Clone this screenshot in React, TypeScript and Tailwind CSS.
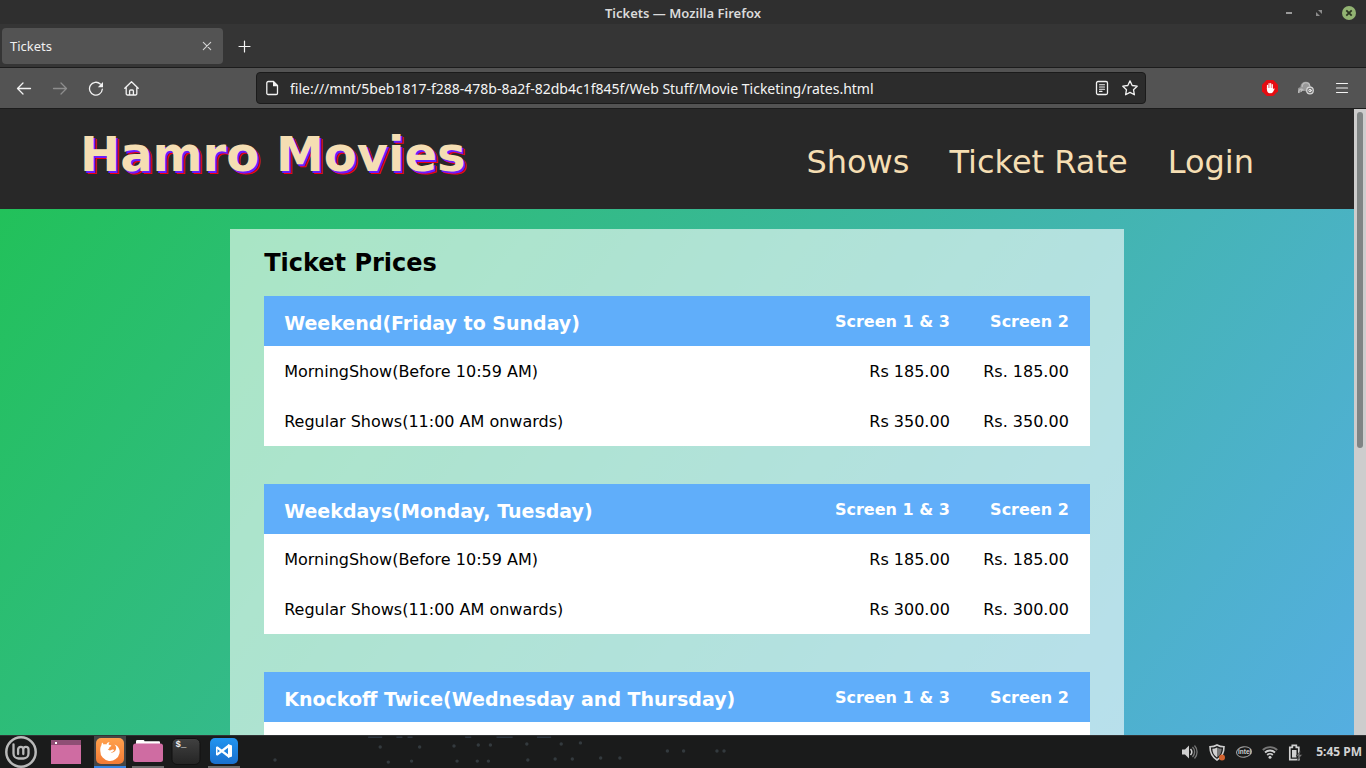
import type { ReactNode } from 'react';

type Rate = { label: string; first: string; second: string };
type RateGroup = { title: string; rates: Rate[] };

const groups: RateGroup[] = [
  {
    title: 'Weekend(Friday to Sunday)',
    rates: [
      { label: 'MorningShow(Before 10:59 AM)', first: 'Rs 185.00', second: 'Rs. 185.00' },
      { label: 'Regular Shows(11:00 AM onwards)', first: 'Rs 350.00', second: 'Rs. 350.00' },
    ],
  },
  {
    title: 'Weekdays(Monday, Tuesday)',
    rates: [
      { label: 'MorningShow(Before 10:59 AM)', first: 'Rs 185.00', second: 'Rs. 185.00' },
      { label: 'Regular Shows(11:00 AM onwards)', first: 'Rs 300.00', second: 'Rs. 300.00' },
    ],
  },
  {
    title: 'Knockoff Twice(Wednesday and Thursday)',
    rates: [],
  },
];

function TitleBar() {
  return (
    <div className="grid h-6 shrink-0 grid-cols-[1fr_auto_1fr] items-center bg-[#2f2f2f] pt-0.5">
      <span />
      <span className="text-[13px] leading-5 font-semibold text-[#dadada]">Tickets — Mozilla Firefox</span>
      <div className="flex items-center justify-end gap-4 pr-2.5">
        <button aria-label="Minimize" className="flex size-3.5 items-center justify-center">
          <svg width="14" height="14" viewBox="0 0 14 14"><path d="M4 6h6v2H4z" fill="#9a9a9a" /></svg>
        </button>
        <button aria-label="Restore" className="flex size-3.5 items-center justify-center">
          <svg width="14" height="14" viewBox="0 0 14 14"><path d="M6 4h4v4zM4 6l4 4H4z" fill="#8c8c8c" /></svg>
        </button>
        <button aria-label="Close window" className="flex size-3.5 items-center justify-center rounded-full bg-[#92b372]">
          <svg width="14" height="14" viewBox="0 0 14 14"><path d="M4.3 4.3l5.4 5.4M9.7 4.3L4.3 9.7" stroke="#2c3522" strokeWidth="1.8" /></svg>
        </button>
      </div>
    </div>
  );
}

function TabStrip() {
  return (
    <div className="flex h-11 shrink-0 items-center border-b border-[#1c1c1c] bg-[#353535] pl-0.5">
      <div className="flex h-9 w-[221px] items-center justify-between rounded bg-[#535353] pr-2 pl-2">
        <span className="pt-0.5 text-[13px] text-[#f0f0f0]">Tickets</span>
        <button aria-label="Close tab" className="size-4">
          <svg width="16" height="16" viewBox="0 0 16 16"><path d="M4.300 4.300l7.400 7.400M11.700 4.300l-7.400 7.400" stroke="#d4d4d4" strokeWidth="1.1" strokeLinecap="round" /></svg>
        </button>
      </div>
      <button aria-label="New tab" className="ml-3.5 size-4">
        <svg width="16" height="16" viewBox="0 0 16 16"><path d="M7.500 3v11M2 8.500h11" stroke="#f4f4f4" strokeWidth="1.2" strokeLinecap="round" /></svg>
      </button>
    </div>
  );
}

function ToolIcon({ label, children }: { label: string; children: ReactNode }) {
  return (
    <button aria-label={label} className="size-4 shrink-0">
      <svg width="16" height="16" viewBox="0 0 16 16" fill="none" stroke="#f2f2f2" strokeWidth="1.3" strokeLinecap="round" strokeLinejoin="round">
        {children}
      </svg>
    </button>
  );
}

function NavigationBar() {
  return (
    <div className="flex h-[41px] shrink-0 items-center border-b border-[#1c1c1c] bg-[#535353] pr-4 pl-4">
      <div className="flex w-60 items-center gap-5">
        <ToolIcon label="Back"><path d="M14.5 8.5h-13M7 3L1.5 8.5 7 14" /></ToolIcon>
        <ToolIcon label="Forward"><path d="M1.5 8.5h13M9 3l5.5 5.5L9 14" stroke="#8d8d8d" /></ToolIcon>
        <ToolIcon label="Reload">
          <path d="M14.3 9.200A6.400 6.400 0 1 1 12.300 4" />
          <path d="M15 2v5.200H9.800z" fill="#f2f2f2" stroke="none" />
        </ToolIcon>
        <ToolIcon label="Home">
          <path d="M.8 8.200L7.500 1.700 14.200 8.200M2.200 7.500v6.300a1.200 1.200 0 0 0 1.200 1.200h8.200a1.200 1.200 0 0 0 1.200-1.200V7.500M5.600 14.800V11a1 1 0 0 1 1-1h1.800a1 1 0 0 1 1 1v3.800" />
        </ToolIcon>
      </div>
      <div className="flex h-8 min-w-0 flex-1 items-center rounded border border-[#1b1b1b] bg-[#2c2c2c] px-[7px]">
        <ToolIcon label="Page information">
          <path d="M2.800 3a1.500 1.500 0 0 1 1.500-1.500h5.200L13.500 5.500v7.700a1.300 1.300 0 0 1-1.300 1.300H4.100a1.300 1.300 0 0 1-1.300-1.300z" />
          <path d="M9 1.200l5 5H9z" fill="#f2f2f2" stroke="none" />
        </ToolIcon>
        <input
          aria-label="Address"
          defaultValue="file:///mnt/5beb1817-f288-478b-8a2f-82db4c1f845f/Web Stuff/Movie Ticketing/rates.html"
          className="mx-2.5 min-w-0 flex-1 bg-transparent pt-0.5 text-sm text-[#f4f4f4] outline-none"
        />
        <div className="flex gap-3">
          <ToolIcon label="Reader view">
            <rect x="2.500" y="1.500" width="11" height="13" rx="1.500" />
            <path d="M5.500 4.700h5M5.500 7h5M5.500 9.200h5M5.500 11.400h2.500" strokeWidth="1.100" />
          </ToolIcon>
          <ToolIcon label="Bookmark">
            <path d="M8 .9l2.200 4.600 5 .7-3.700 3.500.9 5.100L8 12.400l-4.400 2.400.9-5.100L.8 6.200l5-.7z" />
          </ToolIcon>
        </div>
      </div>
      <div className="flex shrink-0 items-center gap-5 pl-29">
        <ToolIcon label="Ad blocker">
          <path d="M4.700 0h6.600L16 4.700v6.600L11.300 16H4.700L0 11.300V4.700z" fill="#e40d12" stroke="none" />
          <path d="M5.500 9V5.300M7.100 8V3.500M8.700 8V3.500M10.300 9V4.700" stroke="#fff" strokeWidth="1.200" />
          <path d="M4.900 8h6v1.500l1-1.300.8.500-1.700 3.300c-.9 1.600-4.300 1.600-5.200.3-.7-.9-.9-2.300-.9-4.300z" fill="#fff" stroke="none" />
        </ToolIcon>
        <ToolIcon label="Cloud sync">
          <path d="M1 13.300a3.200 3.200 0 0 1 1.500-6A5 5 0 0 1 8 1.800a4.300 4.300 0 0 1 4.300 4l2 2L10 12l-5-1.500z" fill="#999" stroke="none" />
          <path d="M.7 12.500c-.2-2.200 1.300-3.600 3.500-3.300M3.300 11.300c.2-.9 1-1.500 2-1.200M4.200 6.600c0-2.200 1.600-3.800 3.700-3.800s3.500 1.300 3.800 2.800" stroke="#c0c0c0" strokeWidth="1.100" />
          <circle cx="12" cy="10.500" r="3.300" fill="#777" stroke="#d8d8d8" strokeWidth="1.200" />
          <circle cx="12" cy="10.500" r="1.200" stroke="#eee" strokeWidth="1" />
        </ToolIcon>
        <ToolIcon label="Menu"><path d="M2.500 3.500h11M2.500 8h11M2.500 12.500h11" strokeWidth="1.200" /></ToolIcon>
      </div>
    </div>
  );
}

function SiteHeader() {
  return (
    <header className="flex h-25 shrink-0 items-center justify-between bg-[#282828] pr-25 pl-20 text-[#f5deb3]">
      <h1 className="pb-2.5 text-5xl font-bold [text-shadow:2px_2px_#6a1cff,3px_3px_#f00010]">Hamro Movies</h1>
      <nav className="flex gap-10 pt-1.5 text-[32px] leading-10">
        <a href="#shows">Shows</a>
        <a href="#rates">Ticket Rate</a>
        <a href="#login">Login</a>
      </nav>
    </header>
  );
}

function RateTable({ group }: { group: RateGroup }) {
  return (
    <table className="mb-[38px] w-full table-fixed border-collapse bg-white text-base text-black">
      <thead>
        <tr className="h-[50px] bg-[#60aefa] text-white">
          <th className="pt-1 pl-5 text-left text-[19px] font-bold">{group.title}</th>
          <th className="w-32 pt-0.5 text-right font-bold">Screen 1 &amp; 3</th>
          <th className="w-[140px] pt-0.5 pr-[21px] text-right font-bold">Screen 2</th>
        </tr>
      </thead>
      <tbody>
        {group.rates.map((rate) => (
          <tr key={rate.label} className="h-[50px]">
            <td className="pt-0.5 pl-5">{rate.label}</td>
            <td className="pt-0.5 text-right">{rate.first}</td>
            <td className="pt-0.5 pr-[21px] text-right">{rate.second}</td>
          </tr>
        ))}
        {group.rates.length === 0 && <tr className="h-[50px]"><td colSpan={3} /></tr>}
      </tbody>
    </table>
  );
}

function Viewport() {
  return (
    <div className="flex min-h-0 flex-1">
      <div className="flex min-w-0 flex-1 flex-col overflow-hidden bg-[#282828] font-['DejaVu_Sans','Verdana',sans-serif]">
        <SiteHeader />
        <div className="min-h-0 flex-1 overflow-hidden bg-[linear-gradient(127deg,#22c15a,#55aee1)] pt-5">
          <main className="mx-auto w-[66%] bg-white/60 px-[34px] pt-4">
            <h2 className="mb-[15px] text-2xl leading-9 font-bold text-black">Ticket Prices</h2>
            {groups.map((group) => (
              <RateTable key={group.title} group={group} />
            ))}
          </main>
        </div>
      </div>
      <div className="w-3 shrink-0 bg-[#cdcdcd] px-[3px] pt-[3px]">
        <div className="h-[54%] rounded-full bg-[#7f8484]" />
      </div>
    </div>
  );
}

function TaskButton({ label, line, children }: { label: string; line: string; children: ReactNode }) {
  return (
    <button aria-label={label} className={`flex h-8 w-8 items-start justify-center border-b-2 pt-px ${line}`}>
      <svg width="30" height="28" viewBox="0 0 30 28">{children}</svg>
    </button>
  );
}

const cityLights = [
  [115, 11], [154, 11], [188, 10], [212, 9], [224, 9], [260, 8], [294, 8], [313, 7], [399, 15], [415, 15],
  [123, 26], [146, 25], [191, 25], [211, 25], [222, 25], [261, 24], [288, 23], [305, 23], [333, 22], [352, 22],
  [448, 15], [455, 15], [3, 24], [11, 24],
];

function Taskbar() {
  return (
    <footer className="flex h-[33px] shrink-0 items-center justify-between border-t border-[#303234] bg-[#1a1b1b] pr-1 pl-1">
      <div className="flex items-center">
        <button aria-label="Menu" className="mr-3.5 size-8">
          <svg width="34" height="32" viewBox="0 0 34 32" fill="none" stroke="#b9b9b9">
            <circle cx="17" cy="16" r="14.700" strokeWidth="2.500" />
            <path d="M9.500 8.500v9a5 5 0 0 0 5 5h5a5 5 0 0 0 5-5v-4a2.600 2.600 0 0 0-5.200 0v4.500M19.300 13.500a2.600 2.600 0 0 0-5.200 0v4.500" strokeWidth="2.300" strokeLinecap="round" />
          </svg>
        </button>
        <div className="flex items-center gap-1.5">
          <div className="mr-1.5">
            <TaskButton label="Show desktop" line="border-transparent">
              <path d="M0 3h30v24H0z" fill="#cf6ca2" />
              <path d="M0 3h30v5H0z" fill="#8f4f75" />
              <path d="M4 5h2v2H4z" fill="#fff" />
            </TaskButton>
          </div>
          <TaskButton label="Firefox" line="border-[#3584e4] bg-[#454545]">
            <defs><linearGradient id="fx" x1="0" y1="0" x2="0" y2="1"><stop stopColor="#ffa14d" /><stop offset="1" stopColor="#f37a35" /></linearGradient></defs>
            <rect x="1" y="1" width="28" height="26" rx="5" fill="url(#fx)" />
            <path d="M7 5.500c.7.400 1.300 1.100 1.600 2 .9-.4 1.900-.4 2.700-.1.900-1.500 2.300-2.300 3.500-2.300-.8.700-1.200 1.500-1.100 2.700l2.500.5c.3.700-.3 1.200-1.800 1.900.1 1-.5 1.800-1.600 1.900.6 1.400 2.300 1.800 3.500 1 1.500-1 2.800-.3 3 0-1 1.900-2.500 2.500-4 2.400 3 .7 6.200-1.600 5.800-5-.2-1.300-.9-2.300-1.900-3 4 1.200 6.100 5 5.300 8.700a9.700 9.700 0 0 1-19.200-2.200c-.2-2.500.2-4.400 1-5.600z" fill="#fff" />
          </TaskButton>
          <TaskButton label="Files" line="border-[#6b6b6b]">
            <path d="M3 5.500V4.300A1.300 1.300 0 0 1 4.300 3h6A1.300 1.300 0 0 1 11.500 4.200H26A1 1 0 0 1 27 5.200V8H3z" fill="#fff" />
            <rect x="0" y="6.500" width="30" height="18.500" rx="2.500" fill="#cf6ca2" />
          </TaskButton>
          <TaskButton label="Terminal" line="border-transparent">
            <defs><linearGradient id="tm" x1="0" y1="0" x2="0" y2="1"><stop stopColor="#414141" /><stop offset="1" stopColor="#242424" /></linearGradient></defs>
            <rect x="1" y="1.500" width="28" height="26" rx="5" fill="url(#tm)" stroke="#111" />
            <text x="4.500" y="10" fill="#eee" fontSize="9" fontWeight="bold" fontFamily="Liberation Mono">$_</text>
          </TaskButton>
          <TaskButton label="Code" line="border-[#6b6b6b]">
            <defs><linearGradient id="vs" x1="0" y1="0" x2="0" y2="1"><stop stopColor="#2295f0" /><stop offset="1" stopColor="#1970ce" /></linearGradient></defs>
            <rect x="1" y="1" width="28" height="26" rx="5" fill="url(#vs)" />
            <path d="M8 10.300l12 9.200M8 17.700L20 8.500" stroke="#fff" strokeWidth="2.300" />
            <path d="M19 7l4 1.500v11L19 21zM7 10l1.500-.7v9.400L7 18z" fill="#fff" />
          </TaskButton>
        </div>
      </div>
      <svg className="ml-8 min-w-0 flex-1" height="32" viewBox="0 0 900 32" preserveAspectRatio="xMinYMid slice" aria-hidden="true">
        {cityLights.map(([x, y]) => (
          <circle key={`${x}-${y}`} cx={x - 8} cy={y} r="1.700" fill="#5b6a72" opacity="0.4" />
        ))}
        <path d="M95 1.500h14M123 1.500h6M134 1.500h5M191 1.500h6M222 1.500h16M262 1.500h14" stroke="#34404e" strokeWidth="1.500" opacity="0.7" />
      </svg>
      <div className="flex items-center gap-2.5 text-[#c4c4c4]">
        <svg width="16" height="16" viewBox="0 0 16 16" role="img" aria-label="Volume">
          <path d="M0 5.500h3l4-4v13l-4-4H0z" fill="#cfcfcf" />
          <path d="M8.500 5a4.500 4.500 0 0 1 0 6" fill="none" stroke="#cfcfcf" strokeWidth="1.500" />
          <path d="M10.500 3a7 7 0 0 1 0 10M12.500 1.500a9.500 9.500 0 0 1 0 13" fill="none" stroke="#777" strokeWidth="1.300" />
        </svg>
        <svg width="18" height="17" viewBox="0 0 18 17" role="img" aria-label="Updates">
          <path d="M9 1c2 1.200 4.500 1.800 7 1.800C16 9 14 13 9 16 4 13 2 9 2 2.800 4.500 2.800 7 2.200 9 1z" fill="none" stroke="#cfcfcf" strokeWidth="1.600" />
          <path d="M9 3.500v10C6 11.500 4.500 9 4.300 4.800 6 4.700 7.500 4.300 9 3.500z" fill="#cfcfcf" />
          <path d="M9 3.500v10C12 11.500 13.500 9 13.700 4.800 12 4.700 10.500 4.300 9 3.500z" fill="#777" />
          <circle cx="14" cy="13.500" r="3" fill="#d3632f" />
        </svg>
        <svg width="16" height="16" viewBox="0 0 16 16" role="img" aria-label="Intel graphics">
          <ellipse cx="8" cy="8" rx="7.500" ry="5.200" fill="none" stroke="#9d9d9d" strokeWidth="1.100" transform="rotate(-8 8 8)" />
          <text x="2" y="10.200" fontSize="6.500" fontWeight="bold" fill="#d0d0d0" fontFamily="Liberation Sans">intel</text>
        </svg>
        <svg width="16" height="16" viewBox="0 0 16 16" role="img" aria-label="Wireless" fill="none" strokeWidth="1.800">
          <path d="M.8 6a10.300 10.300 0 0 1 14.400 0" stroke="#777" />
          <path d="M3 8.500a7.200 7.200 0 0 1 10 0M5.200 11a4 4 0 0 1 5.600 0" stroke="#d0d0d0" />
          <circle cx="8" cy="13.300" r="1.500" fill="#d0d0d0" />
        </svg>
        <svg className="mr-0.5" width="16" height="17" viewBox="0 0 16 17" role="img" aria-label="Battery">
          <path d="M1.800 3.300h2.500V1.300h4v2h2.500v12.400h-9z" fill="none" stroke="#d0d0d0" strokeWidth="1.700" />
          <path d="M4 6h4.500v7.500H4z" fill="#d0d0d0" />
          <path d="M13 6.500l-5 5.500h2.800l-1.500 4.500 5.200-6h-3z" fill="#777" stroke="#1a1b1b" strokeWidth=".5" />
        </svg>
        <time className="text-xs font-bold text-[#d3d3d3]">5:45 PM</time>
      </div>
    </footer>
  );
}

export default function App() {
  return (
    <div className="flex h-screen flex-col overflow-hidden font-['Noto_Sans','Open_Sans',sans-serif]">
      <TitleBar />
      <TabStrip />
      <NavigationBar />
      <Viewport />
      <Taskbar />
    </div>
  );
}
